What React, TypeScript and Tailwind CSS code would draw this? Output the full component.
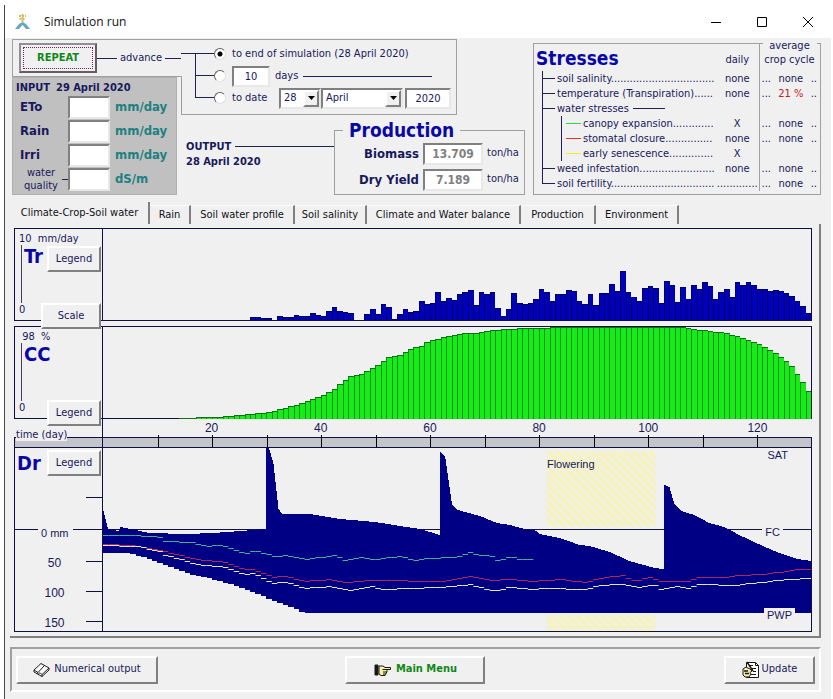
import { ReactNode } from 'react';

const DAYS = 130;
const STEP = 710 / DAYS;

type Point = [number, number];

// transpiration per day, from day 27 on
const transpiration = [
  3, 3, 2, 2, 0, 4, 3, 3, 5, 4, 4, 7, 5, 4, 9, 13, 9, 8, 7, 0, 0, 6, 11, 6, 16, 13, 1, 6, 11, 8,
  9, 19, 16, 17, 28, 19, 22, 20, 26, 28, 30, 15, 28, 26, 28, 12, 4, 11, 27, 17, 16, 17, 21, 31, 28, 19, 26, 26, 30, 29,
  19, 16, 26, 15, 27, 27, 36, 29, 49, 28, 23, 19, 32, 34, 32, 17, 39, 35, 18, 33, 21, 35, 31, 38, 34, 21, 28, 31, 23, 38,
  35, 38, 35, 31, 31, 29, 30, 29, 27, 24, 19, 14, 7,
];

const canopy: Point[] = [
  [14, 1], [20, 2], [23, 3], [27, 5], [30, 7], [33, 11], [35, 14], [37, 18], [40, 24], [41, 27], [42, 30], [43, 35],
  [45, 43], [47, 45], [48, 48], [50, 54], [52, 62], [54, 64], [56, 70], [58, 73], [59, 77], [62, 82], [66, 86], [68, 86],
  [71, 89], [74, 90], [78, 91], [85, 92], [106, 92], [108, 90], [111, 88], [114, 86], [117, 81], [120, 75], [123, 66],
  [125, 58], [126, 53], [127, 45], [128, 37], [129, 28],
];

// soil water content, surface outline
const waterTop: Point[] = [
  [0, 61], [5, 81], [16, 83], [17, 79], [28, 81], [46, 85], [84, 86], [110, 85], [138, 83], [163, 81], [163, 0], [166, 0],
  [168, 5], [171, 16], [176, 61], [180, 66], [208, 66], [238, 71], [273, 74], [298, 78], [318, 81], [338, 87], [338, 4],
  [343, 8], [350, 56], [356, 62], [378, 68], [395, 75], [408, 77], [423, 81], [433, 82], [438, 86], [458, 90], [478, 97],
  [488, 98], [508, 104], [528, 113], [553, 120], [563, 121], [563, 37], [568, 39], [573, 56], [580, 63], [593, 67],
  [608, 75], [623, 79], [638, 87], [653, 94], [673, 103], [696, 111], [710, 113],
];

const rootDepth: Point[] = [
  [0, 105], [28, 105], [46, 111], [63, 117], [84, 125], [113, 132], [138, 139], [168, 151], [188, 159], [203, 165], [710, 165],
];

const expansion: Point[] = [
  [0, 87], [33, 87], [58, 89], [60, 93], [88, 94], [103, 98], [118, 97], [143, 105], [153, 102], [173, 109], [183, 107],
  [203, 111], [233, 107], [243, 112], [258, 109], [273, 111], [298, 108], [313, 112], [323, 110], [353, 109], [368, 104],
  [378, 107], [391, 108], [396, 113], [408, 108], [418, 111], [431, 111],
];

const closure: Point[] = [
  [0, 96], [28, 97], [60, 103], [98, 112], [118, 113], [143, 121], [148, 120], [173, 130], [178, 127], [203, 133],
  [228, 131], [243, 134], [268, 132], [338, 133], [353, 131], [368, 128], [388, 132], [408, 131], [428, 133], [458, 131],
  [483, 134], [498, 130], [520, 127], [533, 133], [548, 129], [560, 133], [588, 133], [598, 129], [628, 129], [633, 127],
  [663, 126], [683, 123], [698, 121], [710, 121],
];

const senescence: Point[] = [
  [0, 97], [33, 98], [58, 103], [60, 106], [98, 117], [118, 118], [143, 126], [150, 125], [171, 135], [180, 133],
  [203, 140], [228, 138], [245, 142], [268, 138], [278, 141], [338, 139], [368, 136], [393, 143], [408, 139], [428, 141],
  [448, 140], [483, 141], [498, 137], [518, 136], [538, 139], [553, 136], [558, 141], [578, 138], [588, 140], [598, 136],
  [633, 137], [658, 134], [688, 131], [710, 130],
];

function valueAt(points: Point[], x: number) {
  for (let i = 1; i < points.length; i++) {
    const [x0, y0] = points[i - 1];
    const [x1, y1] = points[i];
    if (x <= x1) return y0 + ((x - x0) / (x1 - x0)) * (y1 - y0);
  }
  return points[points.length - 1][1];
}

// one horizontal dash per day
function dashes(points: Point[]) {
  const end = points[points.length - 1][0];
  let d = '';
  for (let x = 0; x < end - 1; x += STEP) {
    d += `M${x.toFixed(1)} ${Math.round(valueAt(points, x + 2)) + 0.5}h${STEP.toFixed(1)}`;
  }
  return d;
}

function waterArea() {
  let d = 'M' + waterTop.map((p) => p.join(' ')).join('L');
  for (let i = DAYS - 1; i >= 0; i--) {
    const y = Math.round(valueAt(rootDepth, i * STEP + 3));
    d += `L${((i + 1) * STEP).toFixed(1)} ${y}L${(i * STEP).toFixed(1)} ${y}`;
  }
  return d + 'Z';
}

const raised = 'border-2 border-t-white border-l-white border-r-[#808080] border-b-[#808080] bg-[#f0f0f0]';
const sunken = 'border-2 border-t-[#808080] border-l-[#808080] border-r-[#e8e8e8] border-b-[#e8e8e8] bg-white';

const SmallButton = ({ children, className }: { children: ReactNode; className: string }) => (
  <button className={`absolute right-px z-10 h-[26px] text-center ${raised} ${className}`}>{children}</button>
);

const Picker = ({ label, value, className }: { label: string; value: string; className: string }) => (
  <span className={`relative flex h-[21px] ${sunken} ${className}`}>
    <select aria-label={label} defaultValue={value} className="w-full appearance-none pl-[3px] outline-none">
      <option>{value}</option>
    </select>
    <span className={`pointer-events-none absolute inset-y-0 right-0 flex w-4 items-center justify-center ${raised}`}>
      <svg width="7" height="4" viewBox="0 0 7 4" className="shrink-0">
        <path d="M0 0h7L3.5 4z" fill="#000" />
      </svg>
    </span>
  </span>
);

const Radio = ({ id, checked }: { id: string; checked?: boolean }) => (
  <input
    id={id}
    type="radio"
    name="advance"
    defaultChecked={checked}
    className="mr-[6px] size-3 shrink-0 appearance-none rounded-full border border-[#606060] border-r-[#e0e0e0] border-b-[#e0e0e0] bg-white checked:bg-[radial-gradient(circle,#000_2px,#fff_3px)]"
  />
);

const Branch = ({ last }: { last?: boolean }) => (
  <span className="flex h-[22px] w-[33px] shrink-0 flex-col pl-[14px]">
    <span className="h-[11px] border-b border-l border-[#202050]" />
    <span className={last ? 'h-[11px]' : 'h-[11px] border-l border-[#202050]'} />
  </span>
);

const inputs = [
  { id: 'eto', label: 'ETo', unit: 'mm/day' },
  { id: 'rain', label: 'Rain', unit: 'mm/day' },
  { id: 'irri', label: 'Irri', unit: 'mm/day' },
  { id: 'quality', label: 'water quality', unit: 'dS/m' },
];

const InputPanel = () => (
  <div className="mr-1 h-[118px] border border-[#b0b0b0] bg-[#c0c0c0] pt-[3px] pl-[3px]">
    <div className="flex gap-[6px] text-[11px] leading-[14px] font-bold whitespace-nowrap">
      <span>INPUT</span>
      <span>29 April 2020</span>
    </div>
    {inputs.map((item) => (
      <div key={item.id} className="flex h-6 items-center">
        {item.id === 'quality' ? (
          <>
            <label htmlFor={item.id} className="w-[46px] pl-1 text-center text-[11px] leading-[13px]">
              {item.label}
            </label>
            <span className="h-px w-[6px] bg-[#202050]" />
          </>
        ) : (
          <label htmlFor={item.id} className="w-[52px] pl-1 text-[13px] font-bold">
            {item.label}
          </label>
        )}
        <input id={item.id} className={`h-[23px] w-[42px] ${sunken}`} />
        <span className="pl-[5px] text-[13px] font-bold text-[#208080]">{item.unit}</span>
      </div>
    ))}
  </div>
);

const Advance = () => (
  <div className="relative h-[76px] w-[276px] border-y border-r border-[#a0a0a0] pt-[3px]">
    <span className="absolute bottom-0 left-0 h-[38px] w-px bg-[#a0a0a0]" />
    <div className="flex h-[22px] items-center">
      <span className="flex h-[22px] w-[33px] shrink-0 flex-col">
        <span className="h-[11px] border-b border-[#202050]" />
        <span className="ml-[14px] h-[11px] border-l border-[#202050]" />
      </span>
      <Radio id="to-end" checked />
      <label htmlFor="to-end" className="whitespace-nowrap">to end of simulation (28 April 2020)</label>
    </div>
    <div className="flex h-[22px] items-center">
      <Branch />
      <Radio id="to-days" />
      <input aria-label="number of days" defaultValue="10" className={`h-[21px] w-[38px] text-center ${sunken}`} />
      <label htmlFor="to-days" className="px-[5px]">days</label>
      <span className="mr-6 h-px flex-1 bg-[#202050]" />
    </div>
    <div className="flex h-[22px] items-center">
      <Branch last />
      <Radio id="to-date" />
      <label htmlFor="to-date" className="w-[47px]">to date</label>
      <Picker label="day" value="28" className="w-[42px]" />
      <Picker label="month" value="April" className="w-[82px]" />
      <input aria-label="year" defaultValue="2020" className={`ml-[2px] h-[21px] w-[46px] text-center ${sunken}`} />
    </div>
  </div>
);

const Production = () => (
  <fieldset className="h-[74px] w-[191px] border border-[#a0a0a0] pr-[5px]">
    <legend className="ml-2 px-[6px] text-[19px] leading-[18px] font-bold text-[#0808a8]">Production</legend>
    {[['Biomass', '13.709'], ['Dry Yield', '7.189']].map(([label, value]) => (
      <div key={label} className="mt-[3px] flex h-[23px] items-center justify-end">
        <label htmlFor={label} className="pr-1 text-[13px] font-bold">{label}</label>
        <input
          id={label}
          readOnly
          defaultValue={value}
          className={`h-[22px] w-[60px] text-center text-[12px] font-bold text-[#808080] ${sunken}`}
        />
        <span className="w-[36px] pl-1">ton/ha</span>
      </div>
    ))}
  </fieldset>
);

const stresses = [
  { name: 'soil salinity', dots: 33, daily: 'none', average: 'none' },
  { name: 'temperature (Transpiration)', dots: 6, daily: 'none', average: '21 %' },
  { name: 'water stresses', dots: 0, daily: '', average: '' },
  { name: 'canopy expansion', dots: 13, daily: 'X', average: 'none', color: 'bg-[#30d848]' },
  { name: 'stomatal closure', dots: 15, daily: 'none', average: 'none', color: 'bg-[#e83030]' },
  { name: 'early senescence', dots: 14, daily: 'X', average: '', color: 'bg-[#f4ec20]' },
  { name: 'weed infestation', dots: 24, daily: 'none', average: 'none' },
  { name: 'soil fertility', dots: 33, daily: '.............', average: 'none', last: true },
];

const Stresses = () => (
  <div className="mt-1 h-[152px] flex-1 border border-[#a0a0a0]">
    <table className="w-full table-fixed border-collapse">
      <thead>
        <tr className="h-[27px]">
          <th className="pl-[2px] text-left text-[19px] leading-[20px] font-bold text-[#0808a8]">Stresses</th>
          <th className="w-[43px] pt-[6px] font-normal">daily</th>
          <th className="relative w-[61px] border-l border-[#a0a0a0] font-normal">
            <span className="absolute -top-[5px] left-[3px] w-[54px] bg-[#f0f0f0] leading-[14px]">average crop cycle</span>
          </th>
        </tr>
      </thead>
      <tbody>
        {stresses.map((row) => (
          <tr key={row.name} className="h-[15px] leading-[15px]">
            <td>
              <div className="flex h-[15px] items-center pl-2 whitespace-nowrap">
                <span className="flex h-[15px] w-[13px] shrink-0 flex-col">
                  <span className={row.color ? 'h-2 border-l border-[#202050]' : 'h-2 border-b border-l border-[#202050]'} />
                  <span className={row.last ? 'h-[7px]' : 'h-[7px] border-l border-[#202050]'} />
                </span>
                {row.color && (
                  <span className="ml-[6px] flex h-[15px] w-5 shrink-0 items-center border-l border-[#202050]">
                    <span className={`ml-1 h-px w-[15px] ${row.color}`} />
                  </span>
                )}
                <span className="pl-[2px]">{row.name + '.'.repeat(row.dots)}</span>
                {row.dots === 0 && <span className="ml-1 h-px w-8 bg-[#202050]" />}
              </div>
            </td>
            <td className="text-center">{row.daily}</td>
            <td className="border-l border-[#a0a0a0]">
              {row.average && (
                <div className="flex h-[15px] justify-between pr-[3px] pl-[2px]">
                  <span>...</span>
                  <span className={row.average === 'none' ? '' : 'text-[#c02020]'}>{row.average}</span>
                  <span>..</span>
                </div>
              )}
            </td>
          </tr>
        ))}
      </tbody>
    </table>
  </div>
);

const tabs = [
  { name: 'Rain', width: 'w-[41px]' },
  { name: 'Soil water profile', width: 'w-[104px]' },
  { name: 'Soil salinity', width: 'w-[72px]' },
  { name: 'Climate and Water balance', width: 'w-[154px]' },
  { name: 'Production', width: 'w-[75px]' },
  { name: 'Environment', width: 'w-[83px]' },
];

const Tabs = () => (
  <div role="tablist" className="mt-2 flex h-[21px] items-end text-[#101018]">
    <button role="tab" aria-selected="true" className="h-[22px] w-[140px] border-r-2 border-[#808080] pl-px whitespace-nowrap">
      Climate-Crop-Soil water
    </button>
    {tabs.map((tab) => (
      <button
        key={tab.name}
        role="tab"
        aria-selected="false"
        className={`h-[19px] border-t border-r-2 border-t-[#fafafa] border-r-[#808080] text-center whitespace-nowrap ${tab.width}`}
      >
        {tab.name}
      </button>
    ))}
  </div>
);

const Gauge = ({ top, name }: { top: string; name: string }) => (
  <div className="flex h-full flex-col pt-[3px] pl-1 leading-[13px]">
    <span className="whitespace-pre">{top}</span>
    <div className="flex flex-1 pl-[2px]">
      <span className="w-px bg-[#404060]" />
      <span className="pl-[2px] text-[20px] leading-[22px] font-bold text-[#0808a8]">{name}</span>
    </div>
    <span className="pb-1">0</span>
  </div>
);

const Charts = () => (
  <div className="border-r-2 border-b-2 border-[#808080] pt-1 pr-[7px] pb-1 pl-1">
    <div className="flex h-[93px] border border-[#101040]">
      <div className="relative w-[88px] shrink-0 border-r border-[#101040]">
        <Gauge top="10  mm/day" name="Tr" />
        <SmallButton className="top-[17px] w-[54px]">Legend</SmallButton>
        <SmallButton className="top-[74px] w-[60px]">Scale</SmallButton>
      </div>
      <svg className="h-[91px] w-0 flex-1" viewBox="0 0 710 91" preserveAspectRatio="none" shapeRendering="crispEdges">
        {transpiration.map((h, i) => (
          <g key={i}>
            <rect x={(i + 27) * STEP} y={91 - h} width={STEP + 0.2} height={h} fill="#0000b8" />
            <rect x={(i + 27) * STEP} y={91 - h} width="1" height={h} fill="#000070" />
            {h > 0 && <rect x={(i + 27) * STEP} y={91 - h} width={STEP + 0.2} height="1" fill="#000060" />}
          </g>
        ))}
      </svg>
    </div>
    <div className="mt-[5px] flex h-[93px] border border-[#101040]">
      <div className="relative w-[88px] shrink-0 border-r border-[#101040]">
        <Gauge top=" 98  %" name="CC" />
        <SmallButton className="top-[73px] w-[54px]">Legend</SmallButton>
      </div>
      <svg className="h-[92px] w-0 flex-1" viewBox="0 0 710 92" preserveAspectRatio="none" shapeRendering="crispEdges">
        {Array.from({ length: DAYS - 14 }, (_, i) => {
          const day = i + 14;
          const h = Math.round(valueAt(canopy, day));
          return (
            <g key={day}>
              <rect x={day * STEP} y={92 - h} width={STEP + 0.2} height={h} fill="#18ec18" />
              <rect x={day * STEP} y={92 - h} width="1" height={h} fill="#009010" />
              <rect x={day * STEP} y={92 - h} width={STEP + 0.2} height="1" fill="#107018" />
            </g>
          );
        })}
      </svg>
    </div>

    <div className="relative flex h-[28px]">
      <div className="flex w-[89px] shrink-0 flex-col border-r border-[#101040]">
        <span className="flex-1" />
        <div className="h-[10px] border-t border-l border-[#101040] bg-[#c4c4cc]" />
        <span className="absolute bottom-[6px] left-[2px] bg-[#f0f0f0] leading-[12px]">time (day)</span>
      </div>
      <div className="flex flex-1 flex-col">
        <div className="flex h-[18px] items-center font-['Liberation_Sans',sans-serif] text-[12px] leading-[14px]">
          <span className="w-[7.7%]" />
          {[20, 40, 60, 80, 100, 120].map((d) => (
            <span key={d} className="w-[15.4%] shrink-0 text-center">{d}</span>
          ))}
        </div>
        <svg className="-mt-[2px] h-[12px] w-full" viewBox="0 0 710 12" preserveAspectRatio="none" shapeRendering="crispEdges">
          <rect y="2" width="710" height="10" fill="#c4c4cc" />
          <rect y="2" width="710" height="1" fill="#101040" />
          <rect x="709" y="2" width="1" height="10" fill="#101040" />
          {Array.from({ length: 12 }, (_, i) => (
            <rect key={i} x={(i + 1) * 54.6} width="1" height="12" fill="#000" />
          ))}
        </svg>
      </div>
    </div>

    <div className="relative flex h-[185px] border border-[#101040]">
      <div className="relative w-[88px] shrink-0 border-r border-[#101040] font-['Liberation_Sans',sans-serif] text-[12px]">
        <div className="flex h-[79px] pt-1 pl-[2px] font-['DejaVu_Sans_Condensed','DejaVu_Sans',sans-serif] text-[20px] leading-[22px] font-bold text-[#0808a8]">
          Dr
        </div>
        <div className="flex h-[13px] items-start">
          <span className="mt-[2px] h-px w-[23px] bg-[#101040]" />
          <span className="flex-1 pl-[3px] text-[11px] leading-[13px] whitespace-nowrap">0 mm</span>
          <span className="mt-[2px] h-px w-[29px] bg-[#101040]" />
        </div>
        {[50, 100, 150].map((v) => (
          <div key={v} className="flex h-[30px] items-end last:h-[31px]">
            <span className="flex-1 pl-2 text-center leading-[13px]">{v}</span>
            <span className="mb-[8px] h-px w-4 bg-[#101040]" />
          </div>
        ))}
        <span className="absolute top-[49px] right-0 h-px w-4 bg-[#101040]" />
        <SmallButton className="top-[2px] w-[54px] font-['DejaVu_Sans_Condensed','DejaVu_Sans',sans-serif] text-[11px]">Legend</SmallButton>
      </div>
      <div className="relative flex-1 font-['Liberation_Sans',sans-serif] text-[11px] leading-[14px]">
        <svg className="h-[183px] w-full" viewBox="0 0 710 183" preserveAspectRatio="none">
          <defs>
            <pattern id="hatch" width="6" height="6" patternUnits="userSpaceOnUse" patternTransform="rotate(-45)">
              <rect width="6" height="6" fill="#f2f0e0" />
              <rect width="3" height="6" fill="#f5f3b8" />
            </pattern>
          </defs>
          <rect x="445" y="3" width="109" height="76" fill="url(#hatch)" />
          <rect x="445" y="167" width="109" height="16" fill="url(#hatch)" />
          <path d="M0 81.5H710" stroke="#101040" fill="none" />
          <path d={waterArea()} fill="#000084" shapeRendering="crispEdges" />
          <path d={dashes(expansion)} stroke="#48b090" fill="none" />
          <path d={dashes(closure)} stroke="#b02858" fill="none" />
          <path d={dashes(senescence)} stroke="#e8e8c8" fill="none" />
        </svg>
        <span className="absolute top-[9px] left-[62.7%]">Flowering</span>
        <span className="absolute top-0 right-[23px]">SAT</span>
        <span className="absolute top-[77px] right-[28px] bg-[#f0f0f0] px-[3px]">FC</span>
        <span className="absolute top-[160px] right-[16px] bg-[#f0f0f0] px-[3px]">PWP</span>
      </div>
    </div>
  </div>
);

const Book = () => (
  <svg width="17" height="15" viewBox="0 0 17 15" fill="#fff" stroke="#181818" strokeLinejoin="round">
    <path d="M1 8L8 1.5l8 4.500v2L9 14.500 1 10z" />
    <path d="M1 8l4 2.500L11.500 3.500M5 10.500L5 12M9 12.500L16 6M6 11c1 0 2 .5 3 1.500v2" fill="none" />
  </svg>
);

const Hand = () => (
  <svg width="18" height="14" viewBox="0 0 18 14" stroke="#181818">
    <path d="M1 2h3v10H1z" fill="#181818" />
    <path d="M5 3h4l2 1.500h5.500v2H12l1 1v1.500l-1 1v1l-1 1.500H7L5 11z" fill="#f8f0a8" />
    <path d="M8.500 6.500H12M9 9h4M9 11h3" fill="none" />
  </svg>
);

const Notes = () => (
  <svg width="18" height="18" viewBox="0 0 18 18" stroke="#181818">
    <path d="M4.500 1.500h9l3 3v12h-12z" fill="#fff" />
    <path d="M13.500 1.500v3h3M7 4.500h4M10 7.500h4M11 10.500h3M9 13.500h5" fill="none" />
    <path d="M1 8l3-2 4 2 2 2-2 1.500 1 1.500-2 3H3l-2-2z" fill="#f4eca8" />
    <path d="M5 1l6 9M2 10h4M3 12.500h4" fill="none" strokeWidth="1.500" />
  </svg>
);

const App = () => {
  return (
    <div className="flex min-h-screen flex-col bg-white pt-[5px] pr-[2px] pl-1 font-['DejaVu_Sans_Condensed','DejaVu_Sans',sans-serif] text-[11px] text-[#18185c]">
      <header className="flex h-[33px] items-center border-l border-[#484848] pl-[9px]">
        <svg width="17" height="18" viewBox="0 0 17 18" fill="none">
          <path d="M8.500 1v8M5 3h7M5.500 6h6" stroke="#dcb868" strokeWidth="2" strokeDasharray="2 1" />
          <path d="M1 16l4-5 3.500-2 3.500 2 4 5h-4l-3.500-4L5 16z" fill="#68a8b8" />
        </svg>
        <h1 className="flex-1 pl-[13px] font-['Open_Sans','Noto_Sans',sans-serif] text-[12px] text-[#101010]">Simulation run</h1>
        <button aria-label="Minimize" className="w-[46px]">
          <svg className="mx-auto" width="12" height="12" viewBox="0 0 12 12"><path d="M1 6.5h10" stroke="#000" /></svg>
        </button>
        <button aria-label="Maximize" className="w-[46px]">
          <svg className="mx-auto" width="12" height="12" viewBox="0 0 12 12"><path d="M1.5 1.5h9v9h-9z" fill="none" stroke="#000" /></svg>
        </button>
        <button aria-label="Close" className="w-[46px]">
          <svg className="mx-auto" width="12" height="12" viewBox="0 0 12 12"><path d="M1 1l10 10M11 1L1 11" stroke="#000" /></svg>
        </button>
      </header>
      <main className="flex-1 border-l border-[#484848] bg-[#f0f0f0] pt-px pr-[10px] pl-[5px]">
        <div className="flex gap-2 pl-[2px]">
          <div className="flex w-[513px] shrink-0">
            <div className="w-[169px]">
              <div className="flex h-[38px] items-center border border-r-0 border-[#a0a0a0] pl-[6px]">
                <button className="h-[30px] w-[78px] border-2 border-t-[#909090] border-l-[#909090] border-r-[#606060] border-b-[#606060] p-[2px] font-bold text-[#108818]">
                  <span className="flex h-full items-center justify-center border border-dotted border-[#802060]">REPEAT</span>
                </button>
                <span className="h-px w-5 bg-[#202050]" />
                <span className="px-[3px]">advance</span>
                <span className="h-px flex-1 bg-[#202050]" />
              </div>
              <InputPanel />
            </div>
            <div className="flex-1">
              <Advance />
              <div className="mt-[6px] flex">
                <div className="w-[153px] pt-[18px] pl-[5px] leading-[15px] font-bold">
                  <div className="flex items-center gap-1">
                    OUTPUT
                    <span className="h-px flex-1 bg-[#202050]" />
                  </div>
                  28 April 2020
                </div>
                <Production />
              </div>
            </div>
          </div>
          <Stresses />
        </div>
        <Tabs />
        <Charts />
        <footer className="mt-[9px] grid h-[45px] grid-cols-3 items-center border-2 border-t-[#a0a0a0] border-l-[#a0a0a0] border-r-white border-b-white px-1">
          <button className={`flex h-7 w-[142px] items-center justify-center gap-1 ${raised}`}>
            <Book />
            Numerical output
          </button>
          <button className={`flex h-7 w-[140px] items-center justify-center gap-1 justify-self-center font-bold text-[#108818] ${raised}`}>
            <Hand />
            Main Menu
          </button>
          <button className={`flex h-7 w-[91px] items-center justify-center gap-[2px] justify-self-end ${raised}`}>
            <Notes />
            Update
          </button>
        </footer>
      </main>
    </div>
  );
};

export default App;
